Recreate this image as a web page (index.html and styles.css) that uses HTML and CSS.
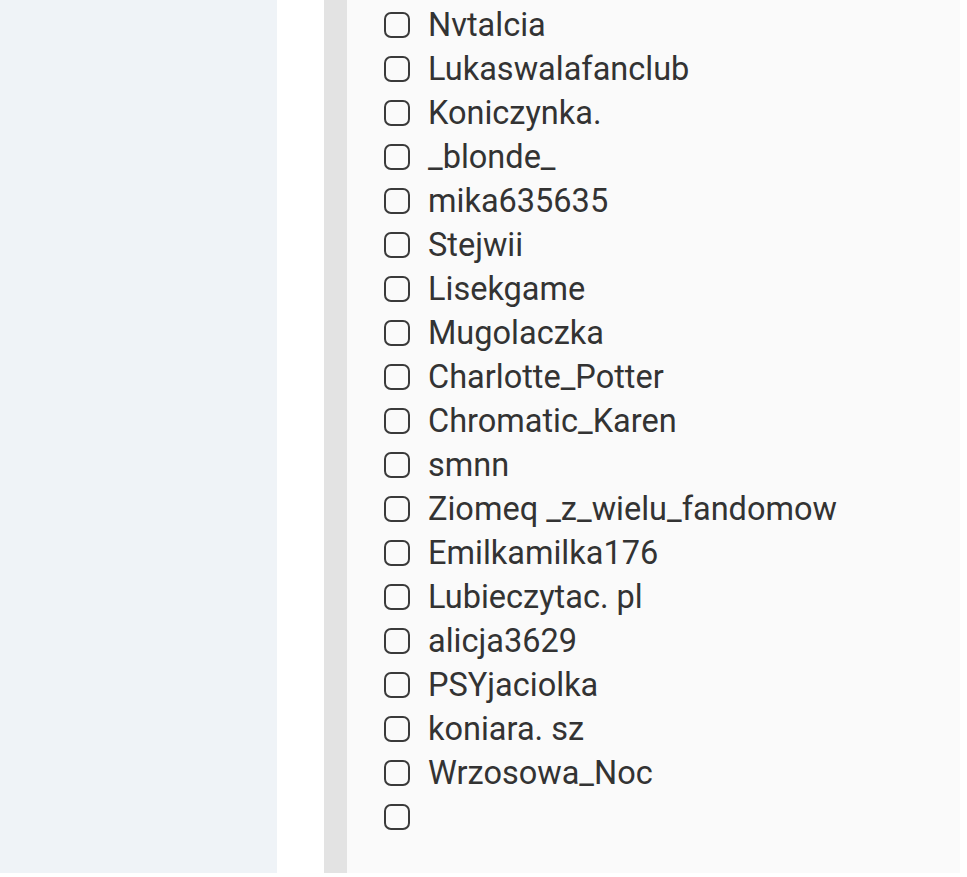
FILE: index.html
```html
<!DOCTYPE html>
<html>
<head>
<meta charset="utf-8">
<link rel="stylesheet" href="styles.css">
</head>
<body>
<div class="page">
  <aside class="side"></aside>
  <div class="gap"></div>
  <div class="bar"></div>
  <main class="content">
    <ul class="list">
      <li><span class="box"></span><span class="name">Nvtalcia</span></li>
      <li><span class="box"></span><span class="name">Lukaswalafanclub</span></li>
      <li><span class="box"></span><span class="name">Koniczynka.</span></li>
      <li><span class="box"></span><span class="name">_blonde_</span></li>
      <li><span class="box"></span><span class="name">mika635635</span></li>
      <li><span class="box"></span><span class="name">Stejwii</span></li>
      <li><span class="box"></span><span class="name">Lisekgame</span></li>
      <li><span class="box"></span><span class="name">Mugolaczka</span></li>
      <li><span class="box"></span><span class="name">Charlotte_Potter</span></li>
      <li><span class="box"></span><span class="name">Chromatic_Karen</span></li>
      <li><span class="box"></span><span class="name">smnn</span></li>
      <li><span class="box"></span><span class="name">Ziomeq _z_wielu_fandomow</span></li>
      <li><span class="box"></span><span class="name">Emilkamilka176</span></li>
      <li><span class="box"></span><span class="name">Lubieczytac. pl</span></li>
      <li><span class="box"></span><span class="name">alicja3629</span></li>
      <li><span class="box"></span><span class="name">PSYjaciolka</span></li>
      <li><span class="box"></span><span class="name">koniara. sz</span></li>
      <li><span class="box"></span><span class="name">Wrzosowa_Noc</span></li>
      <li><span class="box"></span><span class="name"></span></li>
    </ul>
  </main>
  <div class="edge"></div>
</div>
</body>
</html>
```
FILE: styles.css
```css
html, body {
  margin: 0;
  padding: 0;
  background: #ffffff;
}
body {
  font-family: Roboto, "Liberation Sans", sans-serif;
  width: 967px;
  height: 877px;
  overflow: hidden;
}
.page {
  display: flex;
  height: 873px;
}
.side {
  width: 277px;
  background: #eff3f7;
}
.gap {
  width: 47px;
  background: #ffffff;
}
.bar {
  width: 23px;
  background: #e3e3e3;
}
.content {
  width: 613px;
  background: #fafafa;
}
.edge {
  flex: 1;
  background: #ffffff;
}
.list {
  list-style: none;
  margin: 0;
  padding: 3px 0 0 37px;
}
.list li {
  display: flex;
  align-items: center;
  height: 44px;
}
.box {
  box-sizing: border-box;
  width: 26px;
  height: 26px;
  border: 2.5px solid #3a3a3a;
  border-radius: 7px;
  flex: none;
}
.name {
  margin-left: 18px;
  font-size: 32.5px;
  color: #333333;
  line-height: 44px;
}
```
